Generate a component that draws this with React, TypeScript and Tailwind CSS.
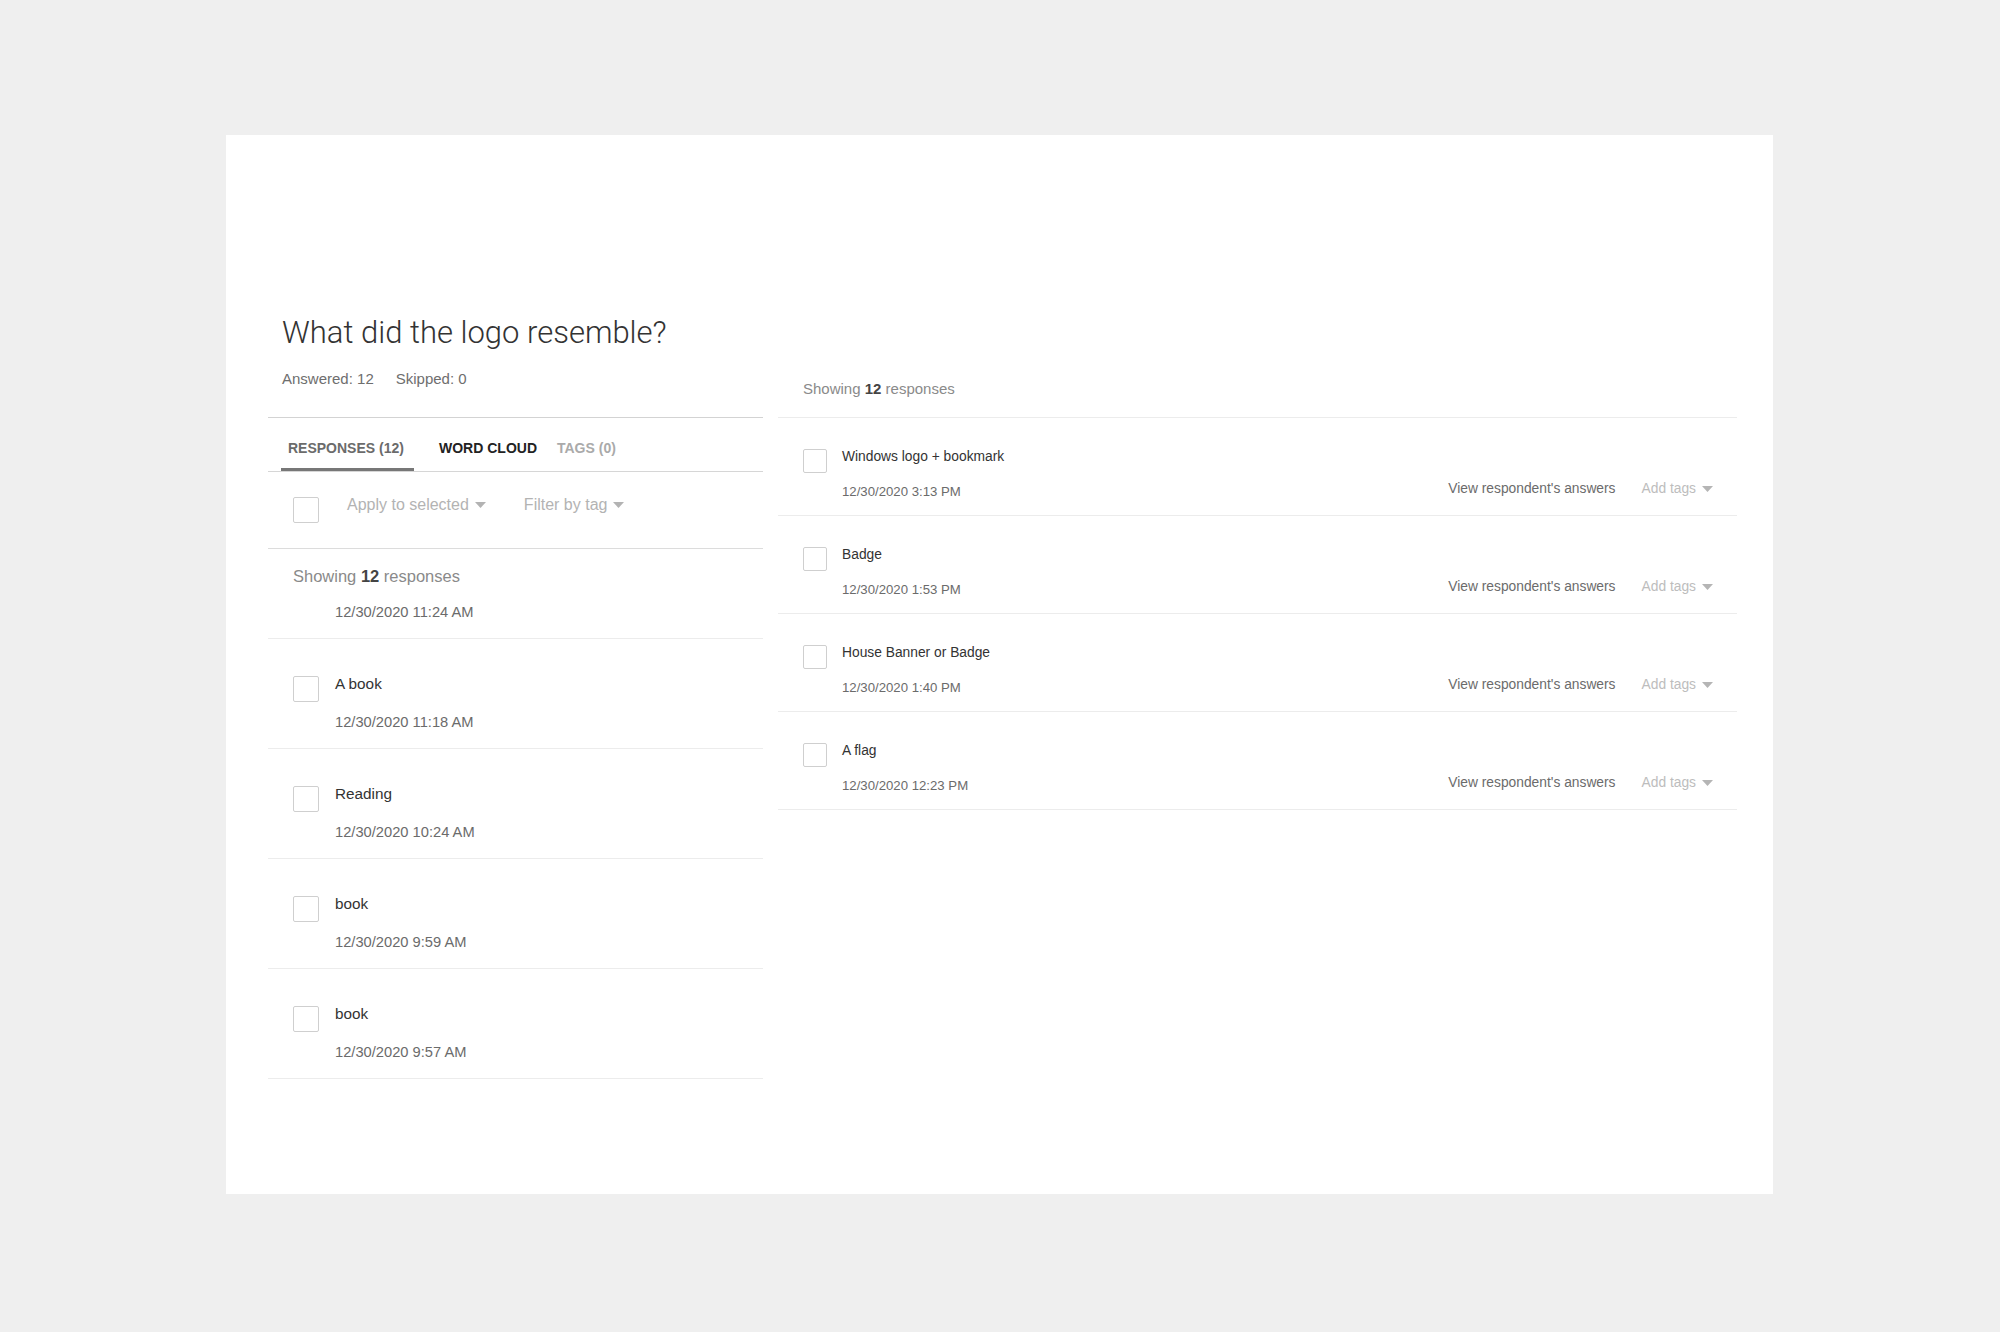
import React from "react";

const Caret = ({ className = "" }: { className?: string }) => (
  <svg width="11" height="6" viewBox="0 0 11 6" className={className}>
    <path d="M0 0 L11 0 L5.5 6 Z" fill="currentColor" />
  </svg>
);

const Box = ({ size }: { size: number }) => (
  <div
    className="shrink-0 rounded-[2px] border border-[#cfcfcf] bg-white"
    style={{ width: size, height: size }}
  />
);

const leftRows = [
  { t: "A book", d: "12/30/2020 11:18 AM" },
  { t: "Reading", d: "12/30/2020 10:24 AM" },
  { t: "book", d: "12/30/2020 9:59 AM" },
  { t: "book", d: "12/30/2020 9:57 AM" },
];

const rightRows = [
  { t: "Windows logo + bookmark", d: "12/30/2020 3:13 PM" },
  { t: "Badge", d: "12/30/2020 1:53 PM" },
  { t: "House Banner or Badge", d: "12/30/2020 1:40 PM" },
  { t: "A flag", d: "12/30/2020 12:23 PM" },
];

export default function App() {
  return (
    <div
      className="min-h-[1332px] w-full bg-[#efefef] pt-[135px]"
      style={{ fontFamily: '"Liberation Sans", Arial, sans-serif' }}
    >
      <div className="ml-[226px] h-[1059px] w-[1547px] bg-white pl-[42px] pt-[180px]">
        <div className="flex gap-[15px]">
          {/* Left column */}
          <div className="w-[495px] shrink-0">
            <div className="pl-[14px]">
              <h1
                className="h-[36px] text-[31px] font-light leading-[36px] text-[#333]"
                style={{ fontFamily: 'Roboto, "Liberation Sans", sans-serif' }}
              >
                What did the logo resemble?
              </h1>
              <div className="mt-[18px] flex h-[20px] items-center gap-[22px] text-[15px] leading-[20px] text-[#6e6e6e]">
                <span>Answered: 12</span>
                <span>Skipped: 0</span>
              </div>
            </div>
            <div className="mt-[28px] border-t border-[#d3d3d3]">
              <div className="flex h-[54px] items-end border-b border-[#d6d6d6] pl-[13px]">
                <div className="flex h-full w-[133px] flex-col">
                  <div className="flex-1 pl-[7px] pt-[20px] text-[14px] font-bold leading-[20px] text-[#6b6b6b]">
                    RESPONSES (12)
                  </div>
                  <div className="h-[3px] w-full bg-[#777]" />
                </div>
                <div className="ml-[25px] h-full pt-[20px] text-[14px] font-bold leading-[20px] text-[#222]">
                  WORD CLOUD
                </div>
                <div className="ml-[20px] h-full pt-[20px] text-[14px] font-bold leading-[20px] text-[#aaa]">
                  TAGS (0)
                </div>
              </div>
              <div className="flex h-[77px] items-center border-b border-[#dcdcdc] pl-[25px]">
                <Box size={26} />
                <div className="ml-[28px] flex -translate-y-[5px] items-center text-[16px] leading-[22px] text-[#b3b3b3]">
                  <span>Apply to selected</span>
                  <Caret className="ml-[6px] text-[#b3b3b3]" />
                  <span className="ml-[38px]">Filter by tag</span>
                  <Caret className="ml-[6px] text-[#b3b3b3]" />
                </div>
              </div>
              <div className="border-b border-[#ececec] pb-[16px] pl-[25px] pt-[15px]">
                <div className="text-[16.5px] leading-[24px] text-[#8a8a8a]">
                  Showing <span className="font-bold text-[#444]">12</span> responses
                </div>
                <div className="mt-[14px] pl-[42px] text-[14.7px] leading-[20px] text-[#6b6b6b]">
                  12/30/2020 11:24 AM
                </div>
              </div>
              {leftRows.map((r, i) => (
                <div
                  key={i}
                  className="flex items-start border-b border-[#ececec] pb-[16px] pl-[25px] pt-[34px]"
                >
                  <div className="mt-[3px]">
                    <Box size={26} />
                  </div>
                  <div className="ml-[16px]">
                    <div className="text-[15.3px] leading-[22px] text-[#333]">{r.t}</div>
                    <div className="mt-[17px] text-[14.7px] leading-[20px] text-[#6b6b6b]">
                      {r.d}
                    </div>
                  </div>
                </div>
              ))}
            </div>
          </div>

          {/* Right column */}
          <div className="w-[959px] shrink-0">
            <div className="border-b border-[#ececec] pb-[17px] pl-[25px] pt-[63px] text-[15px] leading-[22px] text-[#8a8a8a]">
              Showing <span className="font-bold text-[#444]">12</span> responses
            </div>
            {rightRows.map((r, i) => (
              <div
                key={i}
                className="flex items-start border-b border-[#ececec] pb-[14px] pl-[25px] pr-[24px] pt-[29px]"
              >
                <div className="mt-[2px]">
                  <Box size={24} />
                </div>
                <div className="ml-[15px] flex-1">
                  <div className="text-[13.8px] leading-[20px] text-[#333]">{r.t}</div>
                  <div className="mt-[16px] flex h-[18px] items-center justify-between">
                    <span className="text-[13.2px] leading-[18px] text-[#6b6b6b]">{r.d}</span>
                    <div className="flex -translate-y-[3px] items-center text-[13.8px] leading-[18px]">
                      <span className="text-[#6b6b6b]">View respondent's answers</span>
                      <span className="ml-[26px] text-[#bdbdbd]">Add tags</span>
                      <Caret className="ml-[6px] text-[#b5b5b5]" />
                    </div>
                  </div>
                </div>
              </div>
            ))}
          </div>
        </div>
      </div>
    </div>
  );
}
